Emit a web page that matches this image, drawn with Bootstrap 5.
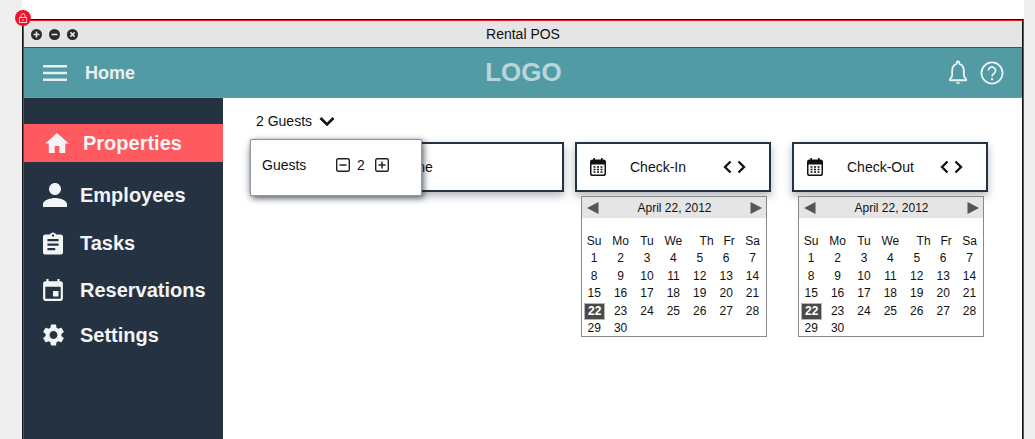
<!DOCTYPE html>
<html lang="en">
<head>
  <meta charset="UTF-8">
  <title>Rental POS</title>
  <link href="https://cdn.jsdelivr.net/npm/bootstrap@5.3.3/dist/css/bootstrap.min.css" rel="stylesheet">
  <style>
    html, body { height: 439px; overflow: hidden; }
    body { background: #eeeeee; font-family: "Liberation Sans", Arial, sans-serif; color: #111; }
    .canvas { margin-left: 22px; width: 1002px; height: 439px; background: #fff; padding-top: 19px; }
    .lock-badge { position: absolute; left: 15px; top: 10px; width: 16px; height: 16px; border-radius: 50%; background: #f2132b; z-index: 5; }
    .win-outer { height: 420px; border-top: 1px solid #111; border-left: 1px solid #111; border-right: 1px solid #f2132b; }
    .win-inner { height: 419px; border-top: 1px solid #f2132b; border-left: 1px solid #f2132b; border-right: 1px solid #111; }
    .title-bar { height: 27px; background: #e5e5e5; border-bottom: 1px solid #2d4f9e; padding: 0 7px; }
    .title-text { font-size: 14px; line-height: 16px; }
    .title-side { flex: 1 1 0; gap: 7px; }
    .top-bar { height: 50px; background: #529ba5; border-bottom: 1px solid #6f92d8; padding: 0 18px 0 19px; }
    .top-left, .top-right { flex: 1 1 0; }
    .top-right { gap: 13px; }
    .home-link { font-size: 18px; font-weight: 700; color: #e9efef; margin-left: 18px; padding-top: 2px; }
    .logo-text { font-size: 26px; font-weight: 700; color: #b9d6da; line-height: 30px; padding-bottom: 1px; }
    .side-nav { width: 199px; background: #253241; padding-top: 26px; }
    .nav-row { height: 38px; color: #f3f4f5; font-size: 20px; font-weight: 700; padding-left: 19px; }
    .nav-row.active-row { background: #ff5a5f; padding-left: 21px; }
    .nav-icon { width: 38px; flex: none; }
    .nav-icon-sm { width: 37px; flex: none; }
    .mt-employees { margin-top: 14px; }
    .mt-tasks { margin-top: 10px; }
    .mt-reserv { margin-top: 9px; }
    .mt-settings { margin-top: 7px; }
    .main-area { padding-left: 27px; }
    .guest-line { font-size: 14px; line-height: 20px; padding: 13px 0 11px 6px; gap: 7px; }
    .field-row { font-size: 14px; }
    .field-box { height: 50px; background: #fff; border: 2px solid #253241; box-shadow: 0 4px 8px rgba(37,50,65,.35); }
    .field-wide { width: 314px; margin-right: 11px; justify-content: center; padding-left: 4px; }
    .field-date { width: 196px; padding-left: 13px; }
    .field-gap { margin-right: 21px; }
    .field-label { width: 117px; padding-left: 24px; flex: none; }
    .chev-pair { gap: 5px; }
    .guest-pop { position: absolute; left: 27px; top: 41px; width: 172px; height: 57px; background: #fff; border: 1px solid #8f979f; border-radius: 2px; box-shadow: 0 0 1px #7d868f, 2px 2px 6px rgba(20,30,40,.65); padding: 0 0 5px 11px; font-size: 14px; z-index: 3; }
    .pop-label { width: 74px; }
    .pop-count { width: 25px; padding-left: 7px; }
    .cal-box { width: 186px; height: 141px; margin: 4px 0 0 6px; border: 1px solid #888; background: #fff; font-size: 12px; }
    .cal-head { height: 21px; background: #e5e5e5; padding: 0 4px 0 5px; }
    .cal-grid { display: grid; grid-template-columns: repeat(7, 26.4px); grid-auto-rows: 17.4px; padding-top: 15px; margin-left: -1px; text-align: center; line-height: 17px; }
    .th-shift { padding-left: 13px; }
    .fr-shift { padding-left: 6px; }
    .cal-today { background: #4a4a4a; color: #fff; font-weight: 700; border: 1px solid #b5b5b5; margin: 0 2px 0 3px; line-height: 15px; }
    svg { display: block; }
  </style>
</head>
<body>

<div class="lock-badge d-flex align-items-center justify-content-center">
  <svg width="8" height="10" viewBox="0 0 8 10"><path d="M2 4.5V2.7a2 2 0 0 1 4 0v1.8" fill="none" stroke="#ffc4ca" stroke-width="1"/><rect x=".5" y="4.5" width="7" height="5" fill="none" stroke="#ffc4ca" stroke-width="1"/><rect x="3.4" y="6.2" width="1.2" height="1.6" fill="#ffc4ca"/></svg>
</div>

<div class="canvas">
  <div class="win-outer">
    <div class="win-inner d-flex flex-column">

      <div class="title-bar d-flex align-items-center">
        <div class="title-side d-flex">
          <svg width="11" height="11" viewBox="0 0 11 11"><circle cx="5.5" cy="5.5" r="5.5" fill="#2b2b2b"/><path d="M5.5 2.5v6M2.5 5.5h6" stroke="#e5e5e5" stroke-width="1.6"/></svg>
          <svg width="11" height="11" viewBox="0 0 11 11"><circle cx="5.5" cy="5.5" r="5.5" fill="#2b2b2b"/><path d="M2.5 5.5h6" stroke="#e5e5e5" stroke-width="1.6"/></svg>
          <svg width="11" height="11" viewBox="0 0 11 11"><circle cx="5.5" cy="5.5" r="5.5" fill="#2b2b2b"/><path d="M3.4 3.4l4.2 4.2M7.6 3.4l-4.2 4.2" stroke="#e5e5e5" stroke-width="1.6"/></svg>
        </div>
        <div class="title-text">Rental POS</div>
        <div class="title-side"></div>
      </div>

      <div class="top-bar d-flex align-items-center">
        <div class="top-left d-flex align-items-center">
          <svg width="24" height="18" viewBox="0 0 24 18"><path d="M0 2.2h24M0 9h24M0 15.8h24" stroke="#e9efef" stroke-width="2.4"/></svg>
          <span class="home-link">Home</span>
        </div>
        <div class="logo-text">LOGO</div>
        <div class="top-right d-flex align-items-center justify-content-end">
          <svg width="18" height="25" viewBox="0 0 20 26" preserveAspectRatio="none"><path d="M10 1.5a1.5 1.5 0 0 1 1.5 1.5v1C15 5 16.5 8 16.5 11.5V16c0 1.500 1.500 2.500 2.500 4v1H1v-1c1-1.500 2.500-2.500 2.500-4v-4.500C3.500 8 5 5 8.500 4V3A1.500 1.500 0 0 1 10 1.500z" fill="none" stroke="#eef3f3" stroke-width="2" stroke-linejoin="round"/><path d="M7.500 23.200a2.600 2.600 0 0 0 5 0z" fill="#eef3f3"/></svg>
          <svg width="24" height="24" viewBox="0 0 25 25"><circle cx="12.500" cy="12.500" r="11" fill="none" stroke="#eef3f3" stroke-width="1.800"/><path d="M8.800 10a3.700 3.700 0 1 1 5.800 3c-1.300.9-2.100 1.500-2.100 3.200" fill="none" stroke="#eef3f3" stroke-width="1.800"/><circle cx="12.500" cy="19" r="1.200" fill="#eef3f3"/></svg>
        </div>
      </div>

      <div class="d-flex flex-grow-1">
        <div class="side-nav">
          <div class="nav-row active-row d-flex align-items-center">
            <div class="nav-icon"><svg width="24" height="20" viewBox="2 3 20 17"><path fill="#f3f4f5" d="M10 20v-6h4v6h5v-8h3L12 3 2 12h3v8z"/></svg></div>
            <span>Properties</span>
          </div>
          <div class="nav-row mt-employees d-flex align-items-center">
            <div class="nav-icon-sm"><svg width="24" height="24" viewBox="4 4 16 16"><path fill="#f3f4f5" d="M12 12c2.210 0 4-1.790 4-4s-1.790-4-4-4-4 1.790-4 4 1.790 4 4 4zm0 2c-2.670 0-8 1.340-8 4v2h16v-2c0-2.660-5.330-4-8-4z"/></svg></div>
            <span>Employees</span>
          </div>
          <div class="nav-row mt-tasks d-flex align-items-center">
            <div class="nav-icon-sm"><svg width="20" height="23" viewBox="3 1 18 20"><path fill="#f3f4f5" d="M19 3h-4.180C14.400 1.840 13.300 1 12 1c-1.300 0-2.400.84-2.820 2H5c-1.100 0-2 .9-2 2v14c0 1.100.9 2 2 2h14c1.100 0 2-.9 2-2V5c0-1.100-.9-2-2-2zm-7 0c.55 0 1 .45 1 1s-.45 1-1 1-1-.45-1-1 .45-1 1-1zm2 14H7v-2h7v2zm3-4H7v-2h10v2zm0-4H7V7h10v2z"/></svg></div>
            <span>Tasks</span>
          </div>
          <div class="nav-row mt-reserv d-flex align-items-center">
            <div class="nav-icon-sm"><svg width="20" height="22" viewBox="3 1 18 20"><path fill="#f3f4f5" d="M17 12h-5v5h5v-5zM16 1v2H8V1H6v2H5c-1.110 0-1.990.9-1.990 2L3 19c0 1.100.89 2 2 2h14c1.100 0 2-.9 2-2V5c0-1.100-.9-2-2-2h-1V1h-2zm3 18H5V8h14v11z"/></svg></div>
            <span>Reservations</span>
          </div>
          <div class="nav-row mt-settings d-flex align-items-center">
            <div class="nav-icon-sm"><svg width="21" height="22" viewBox="2.500 2 19 20"><path fill="#f3f4f5" d="M19.140 12.940c.04-.3.06-.61.06-.94 0-.32-.02-.64-.07-.94l2.030-1.580c.18-.14.23-.41.12-.61l-1.920-3.320c-.12-.22-.37-.29-.59-.22l-2.390.96c-.5-.38-1.030-.7-1.620-.94l-.36-2.540c-.04-.24-.24-.41-.48-.41h-3.840c-.24 0-.43.17-.47.41l-.36 2.540c-.59.24-1.130.57-1.620.94l-2.390-.96c-.22-.08-.47 0-.59.22L2.740 8.870c-.12.21-.08.47.12.61l2.030 1.580c-.05.3-.09.63-.09.94s.02.64.07.94l-2.030 1.580c-.18.14-.23.41-.12.61l1.920 3.320c.12.22.37.29.59.22l2.390-.96c.5.38 1.030.7 1.620.94l.36 2.540c.05.24.24.41.48.41h3.840c.24 0 .44-.17.47-.41l.36-2.540c.59-.24 1.130-.56 1.620-.94l2.390.96c.22.08.47 0 .59-.22l1.920-3.320c.12-.22.07-.47-.12-.61l-2.010-1.580zM12 15.600c-1.980 0-3.600-1.620-3.600-3.600s1.620-3.600 3.600-3.600 3.600 1.620 3.600 3.600-1.620 3.600-3.600 3.600z"/></svg></div>
            <span>Settings</span>
          </div>
        </div>

        <div class="main-area flex-grow-1 position-relative">
          <div class="guest-line d-flex align-items-center">
            <span>2 Guests</span>
            <svg width="16" height="11" viewBox="0 0 16 11"><path d="M1.500 2l6.500 6.500L14.500 2" fill="none" stroke="#111" stroke-width="2.600"/></svg>
          </div>

          <div class="guest-pop d-flex align-items-center">
            <span class="pop-label">Guests</span>
            <svg width="14" height="14" viewBox="0 0 14 14"><rect x=".7" y=".7" width="12.600" height="12.600" rx="1.500" fill="none" stroke="#222" stroke-width="1.400"/><path d="M3.500 7h7" stroke="#222" stroke-width="1.500"/></svg>
            <span class="pop-count">2</span>
            <svg width="14" height="14" viewBox="0 0 14 14"><rect x=".7" y=".7" width="12.600" height="12.600" rx="1.500" fill="none" stroke="#222" stroke-width="1.400"/><path d="M3.500 7h7M7 3.500v7" stroke="#222" stroke-width="1.500"/></svg>
          </div>

          <div class="field-row d-flex align-items-start">
            <div class="field-box field-wide d-flex align-items-center">Anyone</div>
            <div class="field-gap" id="check-in"></div>
            <div id="check-out"></div>
          </div>
        </div>
      </div>

    </div>
  </div>
</div>

<script>
  // both date columns are the same widget, so build them from one template
  const days = ['Su', 'Mo', 'Tu', 'We', 'Th', 'Fr', 'Sa'];
  const dayClass = { Th: 'th-shift', Fr: 'fr-shift' };

  function calendarCells() {
    let html = days.map(d => `<div class="${dayClass[d] || ''}">${d}</div>`).join('');
    for (let n = 1; n <= 30; n++) {
      html += n === 22 ? `<div class="cal-today">${n}</div>` : `<div>${n}</div>`;
    }
    return html;
  }

  function dateColumn(label) {
    return `
      <div class="field-box field-date d-flex align-items-center">
        <svg width="16" height="18" viewBox="0 0 16 18"><rect x=".75" y="2.200" width="14.500" height="15" rx="1.800" fill="none" stroke="#111" stroke-width="1.500"/><rect x="1" y="2.500" width="14" height="4" fill="#111"/><path d="M4.200 0v3.500M11.800 0v3.500" stroke="#111" stroke-width="1.600"/><path d="M3.500 9h2M7 9h2M10.500 9h2M3.500 11.500h2M7 11.500h2M10.500 11.500h2M3.500 14h2M7 14h2M10.500 14h2" stroke="#111" stroke-width="1.500"/></svg>
        <div class="field-label">${label}</div>
        <div class="chev-pair d-flex">
          <svg width="9" height="14" viewBox="0 0 9 14"><path d="M7.500 1.500L2 7l5.500 5.500" fill="none" stroke="#111" stroke-width="2.300"/></svg>
          <svg width="9" height="14" viewBox="0 0 9 14"><path d="M1.500 1.500L7 7l-5.500 5.500" fill="none" stroke="#111" stroke-width="2.300"/></svg>
        </div>
      </div>
      <div class="cal-box">
        <div class="cal-head d-flex align-items-center justify-content-between">
          <svg width="12" height="12" viewBox="0 0 12 12"><path d="M11.500 0v12L0 6z" fill="#555"/></svg>
          <span>April 22, 2012</span>
          <svg width="12" height="12" viewBox="0 0 12 12"><path d="M.5 0v12L12 6z" fill="#555"/></svg>
        </div>
        <div class="cal-grid">${calendarCells()}</div>
      </div>`;
  }

  document.getElementById('check-in').innerHTML = dateColumn('Check-In');
  document.getElementById('check-out').innerHTML = dateColumn('Check-Out');
</script>

</body>
</html>
